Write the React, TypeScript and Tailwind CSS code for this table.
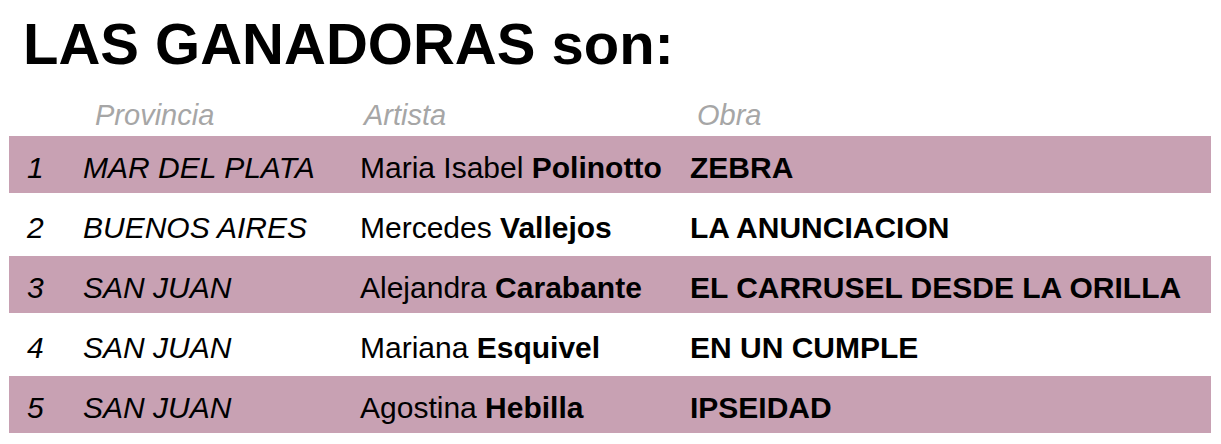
import React from "react";

const rows = [
  { n: "1", prov: "MAR DEL PLATA", first: "Maria Isabel", last: "Polinotto", obra: "ZEBRA", pink: true },
  { n: "2", prov: "BUENOS AIRES", first: "Mercedes", last: "Vallejos", obra: "LA ANUNCIACION", pink: false },
  { n: "3", prov: "SAN JUAN", first: "Alejandra", last: "Carabante", obra: "EL CARRUSEL DESDE LA ORILLA", pink: true },
  { n: "4", prov: "SAN JUAN", first: "Mariana", last: "Esquivel", obra: "EN UN CUMPLE", pink: false },
  { n: "5", prov: "SAN JUAN", first: "Agostina", last: "Hebilla", obra: "IPSEIDAD", pink: true },
];

export default function App() {
  return (
    <div
      className="w-[1221px] h-[444px] bg-white text-black overflow-hidden"
      style={{ fontFamily: '"Liberation Sans", Arial, sans-serif' }}
    >
      <div className="pl-[23px] pt-[8px] h-[92px] flex items-start">
        <h1 className="text-[58px] leading-[72px] font-bold">LAS GANADORAS son:</h1>
      </div>
      <div className="flex items-center h-[44px] pt-[2px] text-[29px] italic text-[#a6a6a6] leading-none">
        <div className="w-[95px]" />
        <div className="w-[269px]">Provincia</div>
        <div className="w-[333px]">Artista</div>
        <div>Obra</div>
      </div>
      <div className="flex flex-col gap-[3px] mx-[9px] w-[1202px]">
        {rows.map((r) => (
          <div
            key={r.n}
            className={`flex items-center h-[57px] pt-[7px] text-[30px] leading-none ${r.pink ? "bg-[#c8a1b3]" : "bg-white"}`}
          >
            <div className="w-[74px] pl-[18px] italic">{r.n}</div>
            <div className="w-[277px] italic">{r.prov}</div>
            <div className="w-[330px]">
              {r.first} <span className="font-bold">{r.last}</span>
            </div>
            <div className="font-bold">{r.obra}</div>
          </div>
        ))}
      </div>
    </div>
  );
}
